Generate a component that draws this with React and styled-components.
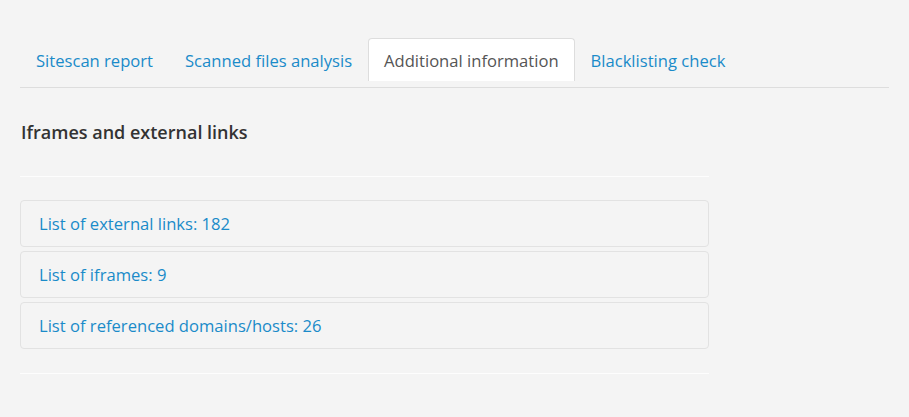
import React from 'react'
import styled, { createGlobalStyle } from 'styled-components'

const GlobalStyle = createGlobalStyle`
  body {
    margin: 0;
    background: #f4f4f4;
    font-family: "Open Sans", "Liberation Sans", sans-serif;
  }
`

const tabs = [
  { label: 'Sitescan report' },
  { label: 'Scanned files analysis' },
  { label: 'Additional information', active: true },
  { label: 'Blacklisting check' },
]

const lists = [
  'List of external links: 182',
  'List of iframes: 9',
  'List of referenced domains/hosts: 26',
]

const App = () => {
  return (
    <Page>
      <GlobalStyle />
      <TabBar>
        {tabs.map((t) => (
          <Tab key={t.label} $active={t.active}>{t.label}</Tab>
        ))}
      </TabBar>
      <Section>
        <Title>Iframes and external links</Title>
        <Divider />
        <PanelList>
          {lists.map((l) => (
            <Panel key={l}>
              <PanelLink href="#">{l}</PanelLink>
            </Panel>
          ))}
        </PanelList>
        <Divider />
      </Section>
    </Page>
  )
}

export default App

const Page = styled.div`
  padding: 38px 20px 40px;
`
const TabBar = styled.div`
  display: flex;
  padding-bottom: 6px;
  border-bottom: 1px solid #dddddd;
`
const Tab = styled.div`
  padding: 0 15px;
  height: 42px;
  display: flex;
  align-items: center;
  font-size: 16.6px;
  color: ${(p) => (p.$active ? '#555555' : '#1a8bc9')};
  background: ${(p) => (p.$active ? '#ffffff' : 'transparent')};
  border: 1px solid ${(p) => (p.$active ? '#dddddd' : 'transparent')};
  border-bottom: none;
  border-radius: 4px 4px 0 0;
`
const Section = styled.div`
  width: 689px;
`
const Title = styled.h3`
  margin: 32px 0 32px 1px;
  font-size: 18px;
  font-weight: 600;
  color: #333333;
`
const Divider = styled.div`
  border-top: 1px solid #fdfdfd;
`
const PanelList = styled.div`
  display: flex;
  flex-direction: column;
  gap: 4px;
  margin: 23px 0 24px;
`
const Panel = styled.div`
  height: 45px;
  display: flex;
  align-items: center;
  padding: 0 18px;
  border: 1px solid #e2e2e2;
  border-radius: 4px;
  background: #f4f4f4;
`
const PanelLink = styled.a`
  font-size: 16.6px;
  color: #1a8bc9;
  text-decoration: none;
`
